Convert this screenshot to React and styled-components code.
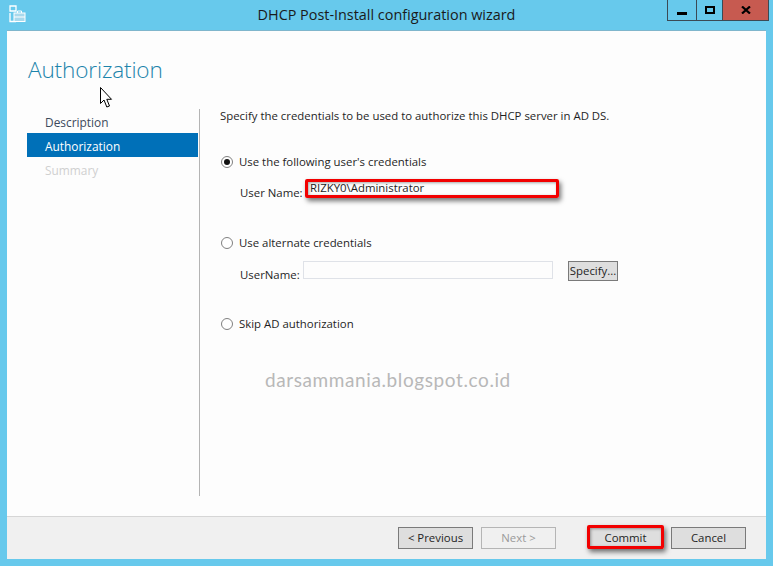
import React from 'react';
import styled, { createGlobalStyle } from 'styled-components';

const Global = createGlobalStyle`
  html, body { margin: 0; padding: 0; background: #67c9ec; }
  * { box-sizing: border-box; }
`;

const Window = styled.div`
  width: 773px;
  height: 566px;
  background: #67c9ec;
  display: flex;
  flex-direction: column;
  font-family: "Open Sans", "Noto Sans", sans-serif;
  font-size: 11.4px;
  color: #1f1f1f;
  overflow: hidden;
`;

const TitleBar = styled.div`
  height: 30px;
  flex: none;
  position: relative;
  display: flex;
  justify-content: center;
  padding-top: 6px;
  font-size: 14.4px;
  line-height: 18px;
  color: #1a1a1a;
`;

const AppIcon = styled.svg`
  position: absolute;
  left: 9px;
  top: 5px;
`;

const Caption = styled.div`
  position: absolute;
  left: 667px;
  top: 0;
  display: flex;
  height: 21px;
  border: 1px solid #3b4a55;
  border-top: none;
`;

const CaptionButton = styled.div`
  width: ${p => p.$w}px;
  background: ${p => (p.$close ? '#c75a50' : 'transparent')};
  border-left: ${p => (p.$first ? 'none' : '1px solid #3b4a55')};
  display: flex;
  align-items: center;
  justify-content: center;
`;

const Body = styled.div`
  width: 759px;
  height: 529px;
  margin-left: 7px;
  background: #fdfdfd;
  display: flex;
  flex-direction: column;
  border-top: 1px solid #7fb6cc;
  position: relative;
`;

const Content = styled.div`
  height: 485px;
  flex: none;
  padding: 23px 20px 0;
`;

const Heading = styled.h1`
  margin: 0 0 23px 1px;
  font-size: 22.6px;
  line-height: 32px;
  font-weight: 300;
  letter-spacing: -0.15px;
  color: #1c84ab;
`;

const Columns = styled.div`
  display: flex;
  height: 387px;
`;

const Nav = styled.div`
  width: 171px;
  font-size: 11.9px;
`;

const NavItem = styled.div`
  height: 24px;
  line-height: 22px;
  padding: 2px 0 0 18px;
  background: ${p => (p.$active ? '#0070b8' : 'transparent')};
  color: ${p => (p.$active ? '#ffffff' : p.$off ? '#d0d0d0' : '#3c4a5c')};
`;

const Divider = styled.div`
  width: 1px;
  margin-left: 1px;
  background: #b4b4b4;
`;

const Main = styled.div`
  padding-left: 20px;
  flex: 1;
`;

const Lead = styled.div`
  line-height: 14px;
  margin-bottom: 31px;
`;

const RadioRow = styled.label`
  display: flex;
  align-items: center;
  gap: 6px;
  height: 16px;
  line-height: 16px;
`;

const RadioDot = styled.span`
  width: 12px;
  height: 12px;
  margin-left: 1px;
  border-radius: 50%;
  border: 1px solid #808080;
  background: #fff;
  display: flex;
  align-items: center;
  justify-content: center;

  &::after {
    content: '';
    width: 6px;
    height: 6px;
    border-radius: 50%;
    background: ${p => (p.$on ? '#111' : 'transparent')};
  }
`;

const Group = styled.div`
  margin-bottom: ${p => p.$gap}px;
`;

const FieldRow = styled.div`
  display: flex;
  align-items: flex-start;
  margin: ${p => p.$top}px 0 0 20px;
  height: 20px;
`;

const FieldLabel = styled.span`
  width: ${p => p.$w}px;
  flex: none;
  margin-top: ${p => p.$drop}px;
  line-height: 16px;
  white-space: nowrap;
`;

const TextBox = styled.div`
  width: 250px;
  height: 18px;
  line-height: 12px;
  padding-left: ${p => (p.$empty ? 0 : 4)}px;
  border: 1px solid ${p => (p.$empty ? '#dfe2e8' : 'transparent')};
  background: #fdfdfd;
`;

const SpecifyButton = styled.div`
  width: 50px;
  height: 20px;
  margin-left: 15px;
  background: #dedede;
  border: 1px solid #7a7a7a;
  line-height: 17px;
  text-align: center;
`;

const Watermark = styled.div`
  margin: 36px 0 0 45px;
  font-family: "Lato", sans-serif;
  font-size: 19px;
  line-height: 24px;
  letter-spacing: 0.6px;
  white-space: nowrap;
  color: #b8b8b8;
`;

const Footer = styled.div`
  flex: 1;
  background: #f0f0f0;
  border-top: 1px solid #d6d6d6;
  display: flex;
  align-items: flex-start;
  padding: 10px 0 0 391px;
`;

const WizardButton = styled.div`
  width: 75px;
  height: 22px;
  margin-left: ${p => p.$gap || 0}px;
  line-height: 20px;
  text-align: center;
  background: ${p => (p.$disabled ? '#f0f0f0' : '#dedede')};
  color: ${p => (p.$disabled ? '#9a9a9a' : '#1f1f1f')};
  border: 1px solid ${p => (p.$disabled ? '#b5b5b5' : '#7a7a7a')};
`;

const RedMark = styled.div`
  position: absolute;
  left: ${p => p.$l}px;
  top: ${p => p.$t}px;
  width: ${p => p.$w}px;
  height: ${p => p.$h}px;
  border: 3px solid #f20000;
  border-radius: 2px;
  box-shadow: 2px 3px 5px rgba(0, 0, 0, 0.55), inset 1px 1px 3px rgba(0, 0, 0, 0.35);
  pointer-events: none;
`;

const Cursor = styled.svg`
  position: absolute;
  left: 93px;
  top: 56px;
`;

export default function App() {
  return (
    <Window>
      <Global />
      <TitleBar>
        <AppIcon width="17" height="18" viewBox="0 0 17 18" fill="none">
          <path d="M1 1h6v5H1zM1 6h6M1 8v8.5h6" stroke="#fff" strokeWidth="1.3" />
          <rect x="5" y="8" width="11" height="8.5" fill="#a9d9ec" stroke="#fff" strokeWidth="1" />
          <path d="M8.5 8V6h4v2M5 12h11" stroke="#fff" strokeWidth="1" />
        </AppIcon>
        DHCP Post-Install configuration wizard
        <Caption>
          <CaptionButton $w={28} $first>
            <svg width="10" height="12" viewBox="0 0 10 12"><rect x="0" y="8" width="10" height="3" fill="#000" /></svg>
          </CaptionButton>
          <CaptionButton $w={26}>
            <svg width="10" height="8" viewBox="0 0 10 8"><rect x="1" y="1" width="8" height="6" fill="none" stroke="#000" strokeWidth="2" /></svg>
          </CaptionButton>
          <CaptionButton $w={46} $close>
            <svg width="10" height="8" viewBox="0 0 10 8"><path d="M1 0.5L9 7.5M9 0.5L1 7.5" stroke="#000" strokeWidth="2.2" /></svg>
          </CaptionButton>
        </Caption>
      </TitleBar>
      <Body>
        <Content>
          <Heading>Authorization</Heading>
          <Columns>
            <Nav>
              <NavItem>Description</NavItem>
              <NavItem $active>Authorization</NavItem>
              <NavItem $off>Summary</NavItem>
            </Nav>
            <Divider />
            <Main>
              <Lead>Specify the credentials to be used to authorize this DHCP server in AD DS.</Lead>
              <Group $gap={34}>
                <RadioRow><RadioDot $on />Use the following user's credentials</RadioRow>
                <FieldRow $top={11}>
                  <FieldLabel $w={65} $drop={4}>User Name:</FieldLabel>
                  <TextBox>RIZKY0\Administrator</TextBox>
                </FieldRow>
              </Group>
              <Group $gap={35}>
                <RadioRow><RadioDot />Use alternate credentials</RadioRow>
                <FieldRow $top={10}>
                  <FieldLabel $w={63} $drop={6}>UserName:</FieldLabel>
                  <TextBox $empty />
                  <SpecifyButton>Specify...</SpecifyButton>
                </FieldRow>
              </Group>
              <RadioRow><RadioDot />Skip AD authorization</RadioRow>
              <Watermark>darsammania.blogspot.co.id</Watermark>
            </Main>
          </Columns>
        </Content>
        <Footer>
          <WizardButton>&lt; Previous</WizardButton>
          <WizardButton $gap={8} $disabled>Next &gt;</WizardButton>
          <WizardButton $gap={32}>Commit</WizardButton>
          <WizardButton $gap={8}>Cancel</WizardButton>
        </Footer>
        <RedMark $l={298} $t={148} $w={254} $h={19} />
        <RedMark $l={580} $t={494} $w={77} $h={24} />
        <Cursor width="13" height="22" viewBox="0 0 13 22">
          <path d="M0.5 0.5V16.5L4 13L6.8 20L9.5 19L6.8 12.3H11.5Z" fill="#fff" stroke="#000" strokeWidth="1" />
        </Cursor>
      </Body>
    </Window>
  );
}
